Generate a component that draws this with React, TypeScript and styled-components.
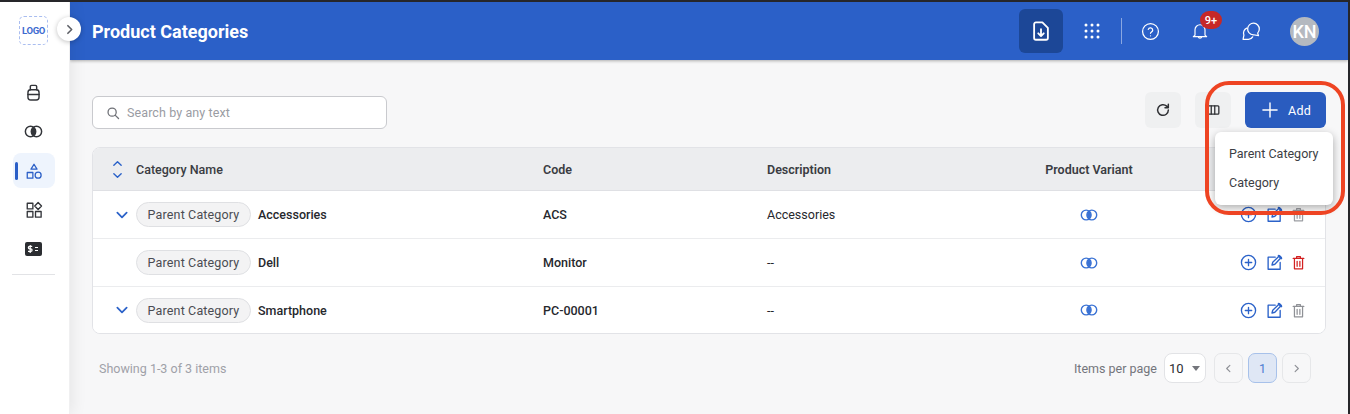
import React from 'react'
import styled, { createGlobalStyle } from 'styled-components'

const GlobalStyle = createGlobalStyle`
  html, body {
    margin: 0;
    padding: 0;
    height: 100%;
    overflow: hidden;
    background: #26262a;
  }
  * {
    box-sizing: border-box;
  }
  body {
    font-family: Roboto, "Liberation Sans", sans-serif;
  }
`

const IconSvg = ({ size = 18, children, color = 'currentColor', sw = 1.6 }: { size?: number; children: React.ReactNode; color?: string; sw?: number }) => (
  <svg width={size} height={size} viewBox="0 0 24 24" fill="none" stroke={color} strokeWidth={sw} strokeLinecap="round" strokeLinejoin="round">
    {children}
  </svg>
)

const VariantIcon = ({ color, size = 18 }: { color: string; size?: number }) => (
  <svg width={size} height={size} viewBox="0 0 18 18" fill="none">
    <circle cx="6.2" cy="9" r="4.9" stroke={color} strokeWidth="1.4" />
    <circle cx="11.8" cy="9" r="4.9" stroke={color} strokeWidth="1.4" />
    <path d="M9 5a4.9 4.9 0 0 1 0 8a4.9 4.9 0 0 1 0-8z" fill={color} />
  </svg>
)

const PlusCircleIcon = () => (
  <IconSvg size={17} color="#2b62c9" sw={1.9}>
    <circle cx="12" cy="12" r="10" />
    <path d="M12 7.5v9M7.5 12h9" />
  </IconSvg>
)

const EditIcon = () => (
  <IconSvg size={17} color="#2b62c9" sw={1.9}>
    <path d="M13 4.500H3v17h17V12" />
    <path d="M8.500 15.500l1-4L19 2.500l2.500 2.500-9 9.500z" />
    <path d="M18 2.500l3.500 3.500" strokeWidth="3" />
  </IconSvg>
)

const TrashIcon = ({ color }: { color: string }) => (
  <IconSvg size={15} color={color} sw={2}>
    <path d="M3.500 5.500h17M9 5V2.500h6V5M5.500 5.500V22h13V5.500M9.800 10v8M14.200 10v8" />
  </IconSvg>
)

const ChevronDown = ({ size = 14 }: { size?: number }) => (
  <IconSvg size={size} color="#2b62c9" sw={3}>
    <path d="M4 8l8 8 8-8" />
  </IconSvg>
)

const Frame = styled.div`
  width: 1348px;
  height: 412px;
  margin-top: 2px;
  display: flex;
  background: #f7f7f8;
  position: relative;
  overflow: hidden;
`

const Sidebar = styled.aside`
  width: 70px;
  flex-shrink: 0;
  background: #fff;
  border-right: 1px solid #f0f0f1;
  box-shadow: 3px 0 14px rgba(0, 0, 0, 0.07);
  display: flex;
  flex-direction: column;
  align-items: center;
  padding: 14px 2px 0 0;
  position: relative;
  z-index: 2;
`

const Logo = styled.div`
  width: 29px;
  height: 29px;
  border: 1px dashed #a9bdf0;
  border-radius: 5px;
  color: #3d6bd0;
  font-size: 9.5px;
  font-weight: 700;
  letter-spacing: -0.4px;
  display: flex;
  align-items: center;
  justify-content: center;
  margin-bottom: 30px;
`

const CollapseButton = styled.button`
  position: absolute;
  top: 15px;
  left: 57px;
  width: 24px;
  height: 24px;
  border: none;
  padding: 0;
  border-radius: 50%;
  background: #fff;
  color: #5d5f66;
  box-shadow: 0 1px 5px rgba(0, 0, 0, 0.25);
  display: flex;
  align-items: center;
  justify-content: center;
  z-index: 3;
`

const SideItem = styled.div<{ $active?: boolean }>`
  width: 42px;
  height: 35px;
  border-radius: 8px;
  margin-bottom: 4px;
  background: ${(p) => (p.$active ? '#eef4fd' : 'transparent')};
  color: #33353a;
  display: flex;
  align-items: center;
  justify-content: center;
  position: relative;

  ${(p) =>
    p.$active &&
    `&::before {
      content: '';
      position: absolute;
      left: 2px;
      top: 9px;
      width: 3px;
      height: 18px;
      border-radius: 2px;
      background: #2b5fc7;
    }`}
`

const SideDivider = styled.div`
  width: 43px;
  height: 1px;
  background: #e2e3e6;
  margin-top: 4px;
`

const Main = styled.main`
  flex: 1;
  min-width: 0;
  display: flex;
  flex-direction: column;
`

const Header = styled.header`
  height: 58px;
  flex-shrink: 0;
  background: #2b60c8;
  box-shadow: 0 1px 3px rgba(0, 0, 0, 0.3);
  display: flex;
  align-items: center;
  padding: 0 29px 0 22px;
  color: #fff;
`

const Title = styled.h1`
  margin: 0;
  flex: 1;
  font-size: 18px;
  font-weight: 700;
  color: #fff;
`

const HeaderActions = styled.div`
  display: flex;
  align-items: center;
`

const ExportButton = styled.div`
  width: 44px;
  height: 44px;
  border-radius: 6px;
  background: #1c4797;
  display: flex;
  align-items: center;
  justify-content: center;
  margin-right: 19px;
`

const HeaderIcon = styled.div<{ $gap: number }>`
  width: 20px;
  height: 24px;
  display: flex;
  align-items: center;
  justify-content: center;
  margin-right: ${(p) => p.$gap}px;
  position: relative;
`

const HeaderDivider = styled.div`
  width: 1px;
  height: 26px;
  background: rgba(255, 255, 255, 0.45);
  margin-right: 18px;
`

const Badge = styled.span`
  position: absolute;
  top: -8px;
  left: 10px;
  width: 22px;
  height: 18px;
  border-radius: 9px;
  background: #c62828;
  color: #fff;
  font-size: 11px;
  font-weight: 500;
  display: flex;
  align-items: center;
  justify-content: center;
`

const Avatar = styled.div`
  width: 29px;
  height: 29px;
  border-radius: 50%;
  background: #b4b9c0;
  color: #fff;
  font-size: 18px;
  font-weight: 500;
  display: flex;
  align-items: center;
  justify-content: center;
`

const Content = styled.section`
  flex: 1;
  padding: 32px 22px 0;
`

const Toolbar = styled.div`
  display: flex;
  align-items: flex-start;
  height: 36px;
  margin-bottom: 19px;
`

const SearchBox = styled.div`
  width: 295px;
  height: 33px;
  margin-top: 4px;
  background: #fff;
  border: 1px solid #c9cace;
  border-radius: 6px;
  display: flex;
  align-items: center;
  gap: 7px;
  padding-left: 13px;
  color: #9a9ca3;
  font-size: 12.5px;
  letter-spacing: 0.1px;
  margin-right: auto;
`

const ToolButton = styled.div`
  width: 36px;
  height: 36px;
  border-radius: 6px;
  background: #eff0f1;
  color: #2f3034;
  display: flex;
  align-items: center;
  justify-content: center;
  margin-right: 14px;
`

const AddButton = styled.button`
  width: 81px;
  height: 36px;
  border: none;
  border-radius: 6px;
  background: #2a5cbf;
  color: #fff;
  font-family: inherit;
  font-size: 12.5px;
  font-weight: 400;
  letter-spacing: 0.3px;
  display: flex;
  align-items: center;
  justify-content: center;
  gap: 8px;
  padding: 0;
`

const Table = styled.div`
  width: 1234px;
  border: 1px solid #e2e3e7;
  border-radius: 8px;
  background: #fff;
  overflow: hidden;
`

const Row = styled.div<{ $head?: boolean; $last?: boolean }>`
  display: grid;
  grid-template-columns: 437px 224px 224px 222px 1fr;
  height: ${(p) => (p.$head ? '43px' : p.$last ? '46px' : '48px')};
  background: ${(p) => (p.$head ? '#ecedef' : '#fff')};
  border-bottom: ${(p) => (p.$last ? 'none' : p.$head ? '1px solid #dfe0e4' : '1px solid #ebecee')};
  font-size: 12.5px;
  font-weight: ${(p) => (p.$head ? 600 : 400)};
  color: ${(p) => (p.$head ? '#3a3c42' : '#26282d')};
`

const Cell = styled.div<{ $center?: boolean; $strong?: boolean }>`
  display: flex;
  align-items: center;
  min-width: 0;
  padding-left: ${(p) => (p.$center ? '0' : '13px')};
  justify-content: ${(p) => (p.$center ? 'center' : 'flex-start')};
  font-weight: ${(p) => (p.$strong ? 500 : 'inherit')};
`

const NameCell = styled.div`
  display: flex;
  align-items: center;
  padding-left: 21px;
  font-weight: 500;
`

const ExpandSlot = styled.div<{ $inset: number }>`
  width: 22px;
  flex-shrink: 0;
  display: flex;
  justify-content: center;
  align-items: center;
  padding-right: ${(p) => p.$inset}px;
`

const SortStack = styled.div`
  display: flex;
  flex-direction: column;
  align-items: center;
  gap: 1px;
`

const Pill = styled.span`
  width: 115px;
  height: 25px;
  border: 1px solid #dfe0e3;
  border-radius: 13px;
  background: #f3f3f4;
  color: #4a4c52;
  font-size: 12.5px;
  font-weight: 400;
  letter-spacing: 0.15px;
  display: flex;
  align-items: center;
  justify-content: center;
  margin-right: 7px;
`

const ActionCell = styled.div`
  display: flex;
  align-items: center;
  gap: 9px;
  padding-left: 40px;
`

const TrashSlot = styled.span`
  display: flex;
  margin-left: -1px;
`

const Footer = styled.div`
  display: flex;
  align-items: center;
  height: 34px;
  margin-top: 17px;
  padding: 0 15px 0 7px;
  font-size: 12.5px;
`

const ShowingText = styled.span`
  color: #9fa1a8;
  margin-right: auto;
`

const PerPageLabel = styled.span`
  color: #73757c;
  margin-right: 7px;
`

const PerPageSelect = styled.div`
  width: 42px;
  height: 30px;
  border: 1px solid #e2e3e6;
  border-radius: 8px;
  background: #fff;
  color: #2c2e33;
  font-size: 13px;
  display: flex;
  align-items: center;
  justify-content: space-between;
  padding: 0 5px 0 4px;
  margin-right: 8px;
`

const Caret = styled.span`
  width: 0;
  height: 0;
  border-left: 4px solid transparent;
  border-right: 4px solid transparent;
  border-top: 5px solid #74767c;
`

const PageButton = styled.div<{ $current?: boolean }>`
  width: 29px;
  height: 30px;
  border: 1px solid ${(p) => (p.$current ? '#a7c1ea' : '#e6e7e9')};
  border-radius: 7px;
  background: ${(p) => (p.$current ? '#dfe7f5' : '#f7f7f8')};
  color: ${(p) => (p.$current ? '#4d7ed2' : '#8d8f95')};
  font-size: 12.5px;
  display: flex;
  align-items: center;
  justify-content: center;
  margin-right: 5px;

  &:last-child {
    margin-right: 0;
  }
`

const Annotation = styled.div`
  position: absolute;
  left: 1205px;
  top: 79px;
  width: 140px;
  height: 134px;
  border: 4px solid #ee4423;
  border-radius: 24px;
  z-index: 5;
  pointer-events: none;
`

const Menu = styled.div`
  position: absolute;
  left: 1215px;
  top: 130px;
  width: 118px;
  height: 73px;
  background: #fff;
  border-radius: 6px;
  box-shadow: 0 3px 8px rgba(0, 0, 0, 0.32);
  z-index: 4;
  padding: 7px 0 0 14px;
  color: #3c3e44;
  font-size: 12.5px;
`

const MenuItem = styled.div`
  height: 29px;
  display: flex;
  align-items: center;
  white-space: nowrap;
`

const rows = [
  { name: 'Accessories', code: 'ACS', desc: 'Accessories', expand: true, trash: '#9b9da2' },
  { name: 'Dell', code: 'Monitor', desc: '--', expand: false, trash: '#d32020' },
  { name: 'Smartphone', code: 'PC-00001', desc: '--', expand: true, trash: '#8f9196' },
]

const App = () => {
  return (
    <>
      <GlobalStyle />
      <Frame>
        <Sidebar>
          <Logo>LOGO</Logo>
          <CollapseButton>
            <IconSvg size={13} sw={3}>
              <path d="M9 5l7 7-7 7" />
            </IconSvg>
          </CollapseButton>
          <SideItem>
            <IconSvg size={19} sw={1.8}>
              <rect x="5" y="8.500" width="14" height="13" rx="3.500" />
              <path d="M5 14.500h14M8 8.500V4.500a1.500 1.500 0 0 1 1.500-1.500h5A1.500 1.500 0 0 1 16 4.500v4" />
            </IconSvg>
          </SideItem>
          <SideItem>
            <VariantIcon color="#33353a" size={19} />
          </SideItem>
          <SideItem $active>
            <IconSvg size={18} color="#2b5fc7" sw={1.7}>
              <path d="M12 3l4 6.500H8z" />
              <rect x="3" y="14" width="7.500" height="7.500" />
              <circle cx="17.500" cy="17.500" r="4" />
            </IconSvg>
          </SideItem>
          <SideItem>
            <IconSvg size={18} sw={1.8}>
              <rect x="3" y="3" width="7.500" height="7.500" />
              <path d="M17.500 2l4.500 4.700-4.500 4.700L13 6.700z" />
              <rect x="3" y="14" width="7.500" height="7.500" />
              <rect x="14" y="14" width="7.500" height="7.500" />
            </IconSvg>
          </SideItem>
          <SideItem>
            <svg width="17" height="14" viewBox="0 0 17 14">
              <rect width="17" height="14" rx="2" fill="#2b2d31" />
              <path d="M7.200 4.300H4.600a1.100 1.100 0 0 0 0 2.500h1.200a1.200 1.200 0 0 1 0 2.600H3M5.200 3v8M10 5.500h3M10 8.500h3" stroke="#fff" strokeWidth="1.200" fill="none" />
            </svg>
          </SideItem>
          <SideDivider />
        </Sidebar>
        <Main>
          <Header>
            <Title>Product Categories</Title>
            <HeaderActions>
              <ExportButton>
                <IconSvg size={22} sw={2}>
                  <path d="M13.500 2.500H6.500a2 2 0 0 0-2 2v15a2 2 0 0 0 2 2h11a2 2 0 0 0 2-2V8.500z" />
                  <path d="M12 10v7M9 14.500l3 3 3-3" />
                </IconSvg>
              </ExportButton>
              <HeaderIcon $gap={19}>
                <svg width="16" height="16" viewBox="0 0 16 16" fill="#fff">
                  {[2, 8, 14].flatMap((y) => [2, 8, 14].map((x) => <circle key={`${x}-${y}`} cx={x} cy={y} r="1.500" />))}
                </svg>
              </HeaderIcon>
              <HeaderDivider />
              <HeaderIcon $gap={30}>
                <IconSvg size={19} sw={1.6}>
                  <circle cx="12" cy="12" r="10" />
                  <path d="M9.200 9.300a2.900 2.900 0 0 1 5.600 1c0 2-2.800 2.400-2.800 4M12 17.500h.01" />
                </IconSvg>
              </HeaderIcon>
              <HeaderIcon $gap={31}>
                <IconSvg size={26} sw={1.4}>
                  <path d="M6 17V10.500a6 6 0 0 1 12 0V17l2 1.800H4zM9.800 19a2.300 2.300 0 0 0 4.400 0" />
                </IconSvg>
                <Badge>9+</Badge>
              </HeaderIcon>
              <HeaderIcon $gap={29}>
                <IconSvg size={24} sw={1.5}>
                  <path d="M9.500 14a7 7 0 1 1 10.500.500l1 3-6-1a7 7 0 0 1-5.500-2.500z" />
                  <path d="M7 8.500a6.500 6.500 0 0 0-3.500 8.500l-1 5H9a6 6 0 0 0 5-3" />
                </IconSvg>
              </HeaderIcon>
              <Avatar>KN</Avatar>
            </HeaderActions>
          </Header>
          <Content>
            <Toolbar>
              <SearchBox>
                <IconSvg size={14} color="#6f7177" sw={2.2}>
                  <circle cx="10.500" cy="10.500" r="7" />
                  <path d="M16 16l5.500 5.500" />
                </IconSvg>
                Search by any text
              </SearchBox>
              <ToolButton>
                <IconSvg size={16} sw={2.2}>
                  <path d="M20 12a8 8 0 1 1-2.500-5.800L20 8.500M20 3.500v5h-5" />
                </IconSvg>
              </ToolButton>
              <ToolButton>
                <IconSvg size={14} sw={2.2}>
                  <rect x="2" y="5" width="20" height="14" rx="1.500" />
                  <path d="M9 5v14M15 5v14" />
                </IconSvg>
              </ToolButton>
              <AddButton>
                <IconSvg size={20} sw={1.7}>
                  <path d="M12 3.500v17M3.500 12h17" />
                </IconSvg>
                Add
              </AddButton>
            </Toolbar>
            <Table>
              <Row $head>
                <NameCell>
                  <ExpandSlot $inset={15}>
                    <SortStack>
                      <IconSvg size={11} color="#2b62c9" sw={3}>
                        <path d="M4 16l8-8 8 8" />
                      </IconSvg>
                      <ChevronDown size={11} />
                    </SortStack>
                  </ExpandSlot>
                  <span>Category Name</span>
                </NameCell>
                <Cell>Code</Cell>
                <Cell>Description</Cell>
                <Cell $center>Product Variant</Cell>
                <Cell />
              </Row>
              {rows.map((row, index) => (
                <Row key={row.name} $last={index === rows.length - 1}>
                  <NameCell>
                    <ExpandSlot $inset={7}>{row.expand && <ChevronDown />}</ExpandSlot>
                    <Pill>Parent Category</Pill>
                    {row.name}
                  </NameCell>
                  <Cell $strong>{row.code}</Cell>
                  <Cell>{row.desc}</Cell>
                  <Cell $center>
                    <VariantIcon color="#3a72d4" />
                  </Cell>
                  <ActionCell>
                    <PlusCircleIcon />
                    <EditIcon />
                    <TrashSlot>
                      <TrashIcon color={row.trash} />
                    </TrashSlot>
                  </ActionCell>
                </Row>
              ))}
            </Table>
            <Footer>
              <ShowingText>Showing 1-3 of 3 items</ShowingText>
              <PerPageLabel>Items per page</PerPageLabel>
              <PerPageSelect>
                10
                <Caret />
              </PerPageSelect>
              <PageButton>
                <IconSvg size={11} sw={2.4}>
                  <path d="M15 5l-7 7 7 7" />
                </IconSvg>
              </PageButton>
              <PageButton $current>1</PageButton>
              <PageButton>
                <IconSvg size={11} sw={2.4}>
                  <path d="M9 5l7 7-7 7" />
                </IconSvg>
              </PageButton>
            </Footer>
          </Content>
        </Main>
        <Menu>
          <MenuItem>Parent Category</MenuItem>
          <MenuItem>Category</MenuItem>
        </Menu>
        <Annotation />
      </Frame>
    </>
  )
}

export default App
